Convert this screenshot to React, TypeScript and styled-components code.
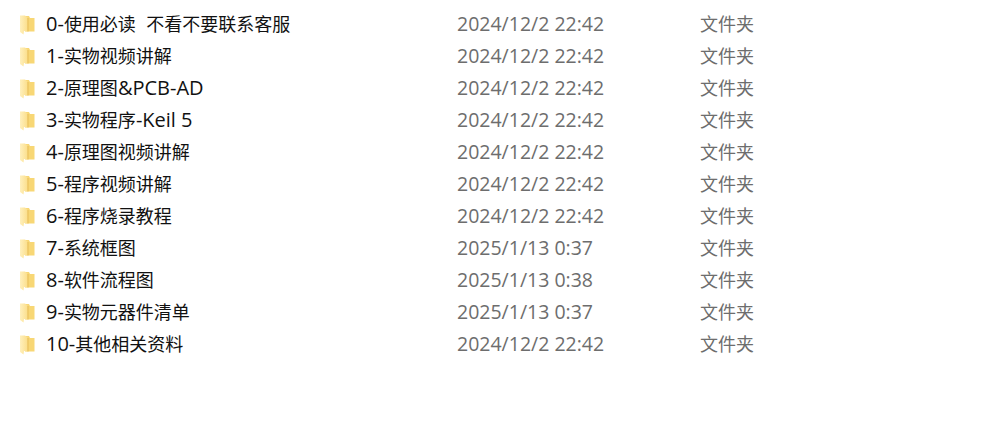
import styled, { createGlobalStyle } from "styled-components";

const folders = [
  { name: "0-使用必读  不看不要联系客服", date: "2024/12/2 22:42" },
  { name: "1-实物视频讲解", date: "2024/12/2 22:42" },
  { name: "2-原理图&PCB-AD", date: "2024/12/2 22:42" },
  { name: "3-实物程序-Keil 5", date: "2024/12/2 22:42" },
  { name: "4-原理图视频讲解", date: "2024/12/2 22:42" },
  { name: "5-程序视频讲解", date: "2024/12/2 22:42" },
  { name: "6-程序烧录教程", date: "2024/12/2 22:42" },
  { name: "7-系统框图", date: "2025/1/13 0:37" },
  { name: "8-软件流程图", date: "2025/1/13 0:38" },
  { name: "9-实物元器件清单", date: "2025/1/13 0:37" },
  { name: "10-其他相关资料", date: "2024/12/2 22:42" },
];

function FolderIcon() {
  return (
    <FolderSvg width="15" height="20" viewBox="0 0 15 20">
      <defs>
        <linearGradient id="folderLeaf" x1="0" y1="0" x2="1" y2="0">
          <stop offset="0" stopColor="#fff0bd" />
          <stop offset="1" stopColor="#fbdf8c" />
        </linearGradient>
      </defs>
      <path d="M5 1 H9 L10 3 H14.5 V16.5 H5 Z" fill="#f8d775" />
      <path d="M0 0.5 H5 L7.5 2.5 V16.5 L4 16 L3.5 19.5 L0 17 Z" fill="url(#folderLeaf)" />
      <path d="M8 3 V16.5" stroke="#e6bd5a" strokeWidth="1" />
    </FolderSvg>
  );
}

// latin runs are set larger than the cjk ones
function MixedText({ text }: { text: string }) {
  return (
    <>
      {text.split(/([\x20-\x7e]+)/).map((part, index) =>
        index % 2 === 1 ? <Latin key={index}>{part}</Latin> : <Cjk key={index}>{part}</Cjk>
      )}
    </>
  );
}

export default function App() {
  return (
    <>
      <GlobalStyle />
      <List>
        {folders.map((folder) => (
          <Row key={folder.name}>
            <NameCell>
              <FolderIcon />
              <Name>
                <MixedText text={folder.name} />
              </Name>
            </NameCell>
            <DateCell>{folder.date}</DateCell>
            <TypeCell>文件夹</TypeCell>
          </Row>
        ))}
      </List>
    </>
  );
}

const GlobalStyle = createGlobalStyle`
  html, body {
    margin: 0;
    background: #fff;
  }
  body {
    font-family: "Open Sans", "Noto Sans CJK SC", sans-serif;
    font-size: 18px;
  }
`;

const List = styled.div`
  display: flex;
  flex-direction: column;
  padding: 8px 0 0 20px;
`;

const Row = styled.div`
  display: grid;
  grid-template-columns: 437px 243px auto;
  align-items: center;
  height: 32px;
  line-height: 32px;
`;

const NameCell = styled.div`
  display: flex;
  align-items: center;
  gap: 11px;
`;

const FolderSvg = styled.svg`
  flex: none;
  margin-top: 2px;
`;

const Name = styled.span`
  color: #111;
  white-space: pre;
`;

const Latin = styled.span`
  font-size: 20px;
`;

const Cjk = styled.span`
  font-size: 18px;
`;

const DateCell = styled.span`
  color: #6d6d6d;
  font-size: 19.5px;
`;

const TypeCell = styled.span`
  color: #6d6d6d;
`;
